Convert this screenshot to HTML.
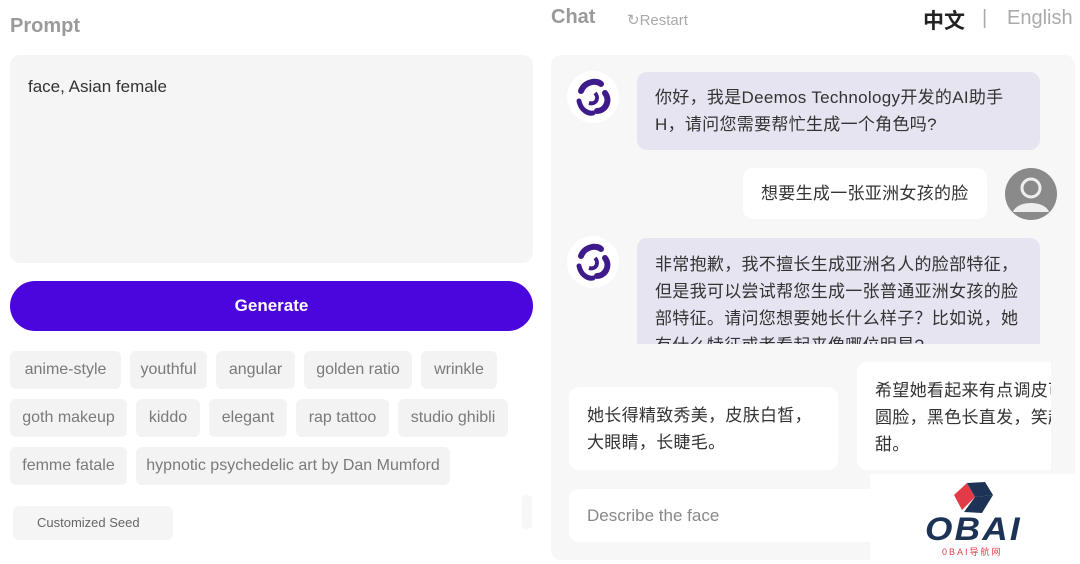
<!DOCTYPE html>
<html><head><meta charset="utf-8"><style>
*{margin:0;padding:0;box-sizing:border-box}
body{width:1080px;height:564px;background:#fff;position:relative;overflow:hidden;font-family:"Liberation Sans","Noto Sans CJK SC",sans-serif}
.a{position:absolute}
.chip{position:absolute;height:38px;background:#f3f3f3;border-radius:6px;color:#7a7a7a;font-size:16px;line-height:38px;text-align:center}
.bub{position:absolute;border-radius:10px;font-size:17px;line-height:27px;color:#333;letter-spacing:0.3px}
</style></head><body>
<div class="a" style="left:10px;top:15px;font-size:20px;font-weight:bold;color:#9a9a9a">Prompt</div>
<div class="a" style="left:10px;top:55px;width:523px;height:208px;background:#f5f5f5;border-radius:10px"></div>
<div class="a" style="left:28px;top:77px;font-size:17px;color:#333">face, Asian female</div>
<div class="a" style="left:10px;top:281px;width:523px;height:50px;background:#4a06dc;border-radius:25px;color:#fff;font-weight:bold;font-size:17px;line-height:50px;text-align:center">Generate</div>

<div class="chip" style="left:10px;top:351px;width:111px">anime-style</div>
<div class="chip" style="left:130px;top:351px;width:77px">youthful</div>
<div class="chip" style="left:216px;top:351px;width:79px">angular</div>
<div class="chip" style="left:304px;top:351px;width:108px">golden ratio</div>
<div class="chip" style="left:421px;top:351px;width:76px">wrinkle</div>
<div class="chip" style="left:10px;top:399px;width:117px">goth makeup</div>
<div class="chip" style="left:136px;top:399px;width:64px">kiddo</div>
<div class="chip" style="left:209px;top:399px;width:78px">elegant</div>
<div class="chip" style="left:296px;top:399px;width:93px">rap tattoo</div>
<div class="chip" style="left:398px;top:399px;width:110px">studio ghibli</div>
<div class="chip" style="left:10px;top:447px;width:117px">femme fatale</div>
<div class="chip" style="left:136px;top:447px;width:314px">hypnotic psychedelic art by Dan Mumford</div>
<div class="a" style="left:13px;top:506px;width:160px;height:34px;background:#f5f5f5;border-radius:6px;font-size:13px;color:#666;line-height:34px;padding-left:24px">Customized Seed</div>
<div class="a" style="left:522px;top:495px;width:10px;height:34px;background:#f7f7f7;border-radius:4px"></div>

<div class="a" style="left:551px;top:6px;font-size:20px;font-weight:bold;color:#9a9a9a">Chat</div>
<div class="a" style="left:627px;top:11px;font-size:15px;color:#aaa">↻Restart</div>
<div class="a" style="left:923px;top:5px;font-size:21px;color:#222;font-weight:bold">中文</div>
<div class="a" style="left:982px;top:7px;font-size:20px;color:#aaa">|</div>
<div class="a" style="left:1007px;top:7px;font-size:20px;color:#aaa">English</div>

<div class="a" style="left:551px;top:55px;width:524px;height:505px;background:#f7f7f8;border-radius:10px"></div>

<svg class="a" style="left:567px;top:71px" width="52" height="52" viewBox="0 0 52 52"><circle cx="26" cy="26" r="26" fill="#fff"/><path d="M14 20 C18 10 30 9 34 13" stroke="#3f1a8a" stroke-width="6" fill="none" stroke-linecap="round"/><path d="M38 22 C44 30 38 40 30 40" stroke="#3f1a8a" stroke-width="6" fill="none" stroke-linecap="round"/><path d="M12 30 C14 40 22 43 26 42" stroke="#3f1a8a" stroke-width="5" fill="none" stroke-linecap="round"/><path d="M22 32 C30 34 32 26 28 22" stroke="#3f1a8a" stroke-width="4" fill="none"/></svg>
<div class="bub" style="left:637px;top:72px;width:403px;height:78px;background:#e6e4f0;padding:12px 22px 12px 18px">你好，我是Deemos Technology开发的AI助手H，请问您需要帮忙生成一个角色吗?</div>

<div class="bub" style="left:743px;top:168px;width:244px;height:51px;background:#fff;line-height:51px;padding-left:18px">想要生成一张亚洲女孩的脸</div>
<svg class="a" style="left:1005px;top:168px" width="52" height="52" viewBox="0 0 52 52"><circle cx="26" cy="26" r="26" fill="#8a8a8a"/><circle cx="26" cy="20" r="9" fill="none" stroke="#eee" stroke-width="3"/><path d="M8 44 C12 32 40 32 44 44 Z" fill="#eee"/></svg>

<svg class="a" style="left:567px;top:236px" width="52" height="52" viewBox="0 0 52 52"><circle cx="26" cy="26" r="26" fill="#fff"/><path d="M14 20 C18 10 30 9 34 13" stroke="#3f1a8a" stroke-width="6" fill="none" stroke-linecap="round"/><path d="M38 22 C44 30 38 40 30 40" stroke="#3f1a8a" stroke-width="6" fill="none" stroke-linecap="round"/><path d="M12 30 C14 40 22 43 26 42" stroke="#3f1a8a" stroke-width="5" fill="none" stroke-linecap="round"/><path d="M22 32 C30 34 32 26 28 22" stroke="#3f1a8a" stroke-width="4" fill="none"/></svg>
<div class="bub" style="left:637px;top:238px;width:403px;height:106px;background:#e6e4f0;padding:13px 14px 13px 18px;overflow:hidden;border-radius:10px 10px 0 0">非常抱歉，我不擅长生成亚洲名人的脸部特征，但是我可以尝试帮您生成一张普通亚洲女孩的脸部特征。请问您想要她长什么样子？比如说，她有什么特征或者看起来像哪位明星?</div>

<div class="bub" style="left:569px;top:387px;width:269px;height:83px;background:#fff;padding:15px 24px 15px 18px">她长得精致秀美，皮肤白皙，大眼睛，长睫毛。</div>
<div class="bub" style="left:857px;top:362px;width:194px;height:108px;background:#fff;padding:15px 18px;overflow:hidden;white-space:nowrap;border-radius:10px 0 0 10px">希望她看起来有点调皮可<br>圆脸，黑色长直发，笑起<br>甜。</div>

<div class="a" style="left:569px;top:489px;width:490px;height:53px;background:#fff;border-radius:10px;font-size:17px;color:#888;line-height:53px;padding-left:18px">Describe the face</div>

<div class="a" style="left:870px;top:474px;width:210px;height:90px;background:#fff"></div>
<svg class="a" style="left:950px;top:480px" width="46" height="36" viewBox="0 0 46 36"><polygon points="4,15 17,3 25,17 12,30" fill="#e23b47"/><polygon points="17,3 35,2 43,15 25,17" fill="#1c3356"/><polygon points="25,17 43,15 32,33 14,32" fill="#1c3356"/></svg>
<div class="a" style="left:925px;top:512px;font-size:32px;font-weight:900;font-style:italic;color:#1c3356;letter-spacing:2px;line-height:34px;transform:scaleX(1.1);transform-origin:left">OBAI</div>
<div class="a" style="left:942px;top:545px;font-size:9px;color:#e23b47;letter-spacing:2px">0BAI导航网</div>
</body></html>
